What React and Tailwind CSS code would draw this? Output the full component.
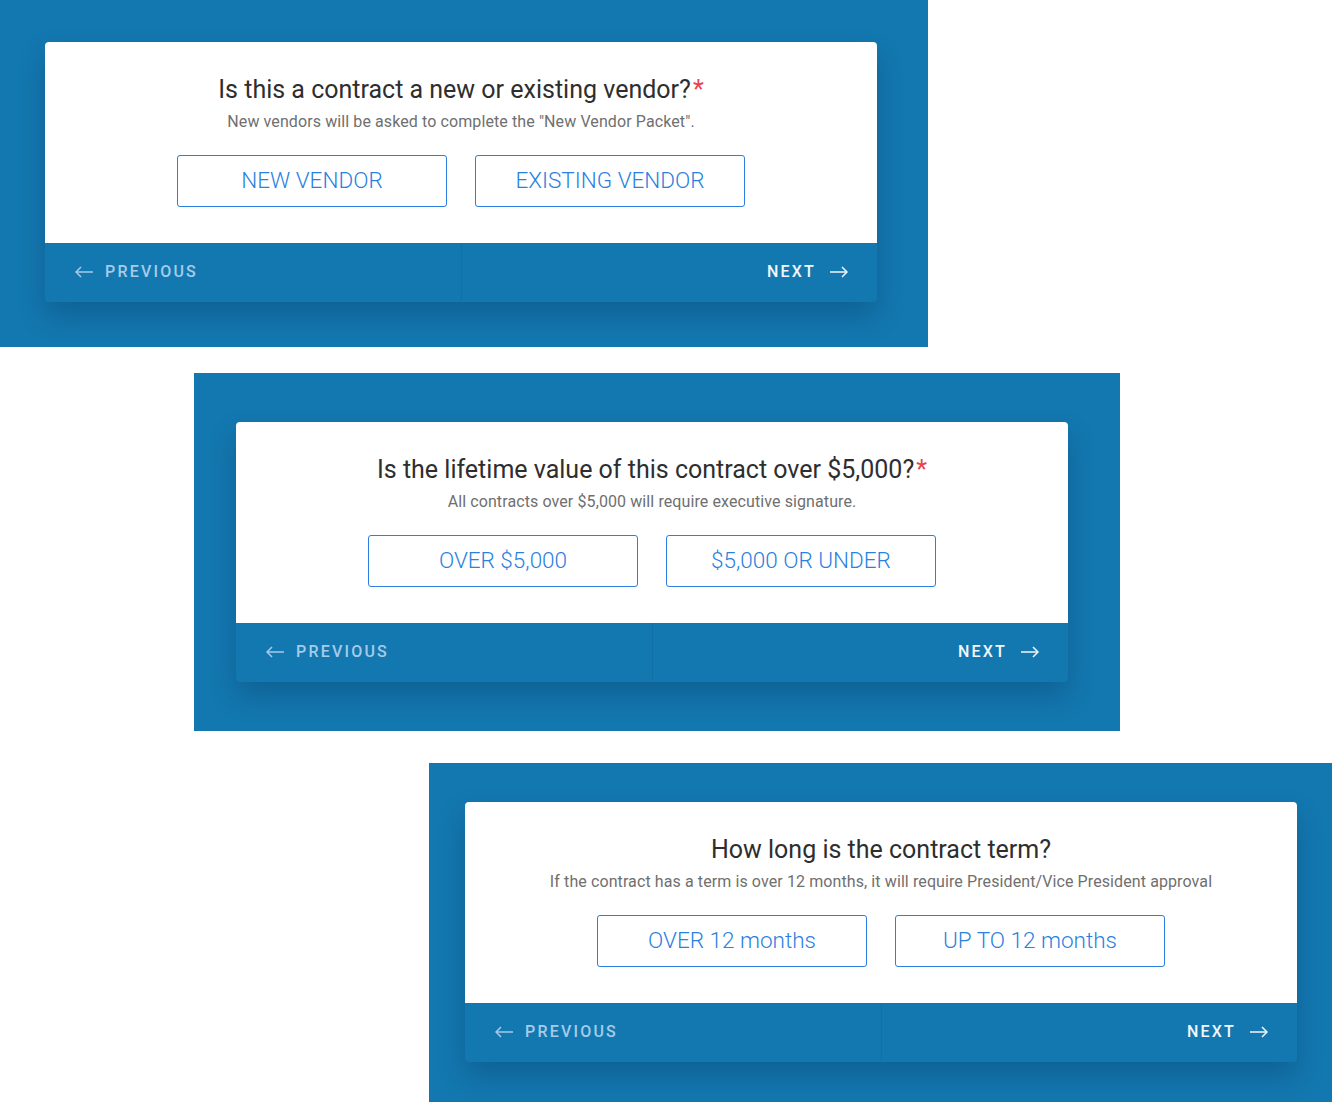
import React from "react";

const steps = [
  {
    title: "Is this a contract a new or existing vendor?",
    required: true,
    hint: 'New vendors will be asked to complete the "New Vendor Packet".',
    options: ["NEW VENDOR", "EXISTING VENDOR"],
    panel: "w-[928px] h-[347px] pt-[42px] pl-[45px]",
  },
  {
    title: "Is the lifetime value of this contract over $5,000?",
    required: true,
    hint: "All contracts over $5,000 will require executive signature.",
    options: ["OVER $5,000", "$5,000 OR UNDER"],
    panel: "ml-[194px] mt-[26px] w-[926px] h-[358px] pt-[49px] pl-[42px]",
  },
  {
    title: "How long is the contract term?",
    required: false,
    hint: "If the contract has a term is over 12 months, it will require President/Vice President approval",
    options: ["OVER 12 months", "UP TO 12 months"],
    panel: "ml-[429px] mt-[32px] w-[903px] h-[339px] pt-[39px] pl-[36px]",
  },
];

function ArrowLeft() {
  return (
    <svg viewBox="0 0 18 12" className="h-3 w-[18px]" fill="none" stroke="currentColor" strokeWidth="1.5">
      <line x1="1" y1="6" x2="18" y2="6" />
      <polyline points="6,1 1,6 6,11" />
    </svg>
  );
}

function ArrowRight() {
  return (
    <svg viewBox="0 0 18 12" className="h-3 w-[18px]" fill="none" stroke="currentColor" strokeWidth="1.5">
      <line x1="0" y1="6" x2="17" y2="6" />
      <polyline points="12,1 17,6 12,11" />
    </svg>
  );
}

function StepCard({ step }) {
  return (
    <div className="w-[832px] rounded-[4px] bg-[#1478b0] shadow-[0_14px_28px_rgba(0,20,50,0.22)] overflow-hidden">
      {/* question */}
      <div className="bg-white pt-[32px] pb-[36px] flex flex-col items-center">
        <h2 className="text-[25px] leading-[32px] text-[#2e2e2e]">
          {step.title}
          {step.required && <span className="text-[#e8434b] ml-[2px]">*</span>}
        </h2>
        <p className="mt-[5px] text-[16px] leading-[22px] tracking-[0.1px] text-[#6f6f6f]">{step.hint}</p>
        <div className="mt-[22px] flex gap-[28px]">
          {step.options.map((o) => (
            <button
              key={o}
              className="h-[52px] w-[270px] rounded-[3px] border border-[#2b7fe0] bg-white text-[22.5px] font-light text-[#2b7fe0]"
            >
              {o}
            </button>
          ))}
        </div>
      </div>

      {/* nav */}
      <div className="flex h-[59px] pb-[1px]">
        <button className="flex flex-1 items-center gap-[12px] pl-[30px] text-[#a6cbea]">
          <ArrowLeft />
          <span className="text-[16px] font-medium tracking-[2.2px]">PREVIOUS</span>
        </button>
        <button className="flex flex-1 items-center justify-end gap-[14px] pr-[29px] border-l border-[#1170a6] text-[#f2f6fa]">
          <span className="text-[16px] font-medium tracking-[2.2px]">NEXT</span>
          <ArrowRight />
        </button>
      </div>
    </div>
  );
}

export default function App() {
  return (
    <div className="min-h-screen bg-white overflow-hidden" style={{ fontFamily: "Roboto, 'Noto Sans', sans-serif" }}>
      {steps.map((s) => (
        <div key={s.title} className={`bg-[#1378b0] ${s.panel}`}>
          <StepCard step={s} />
        </div>
      ))}
    </div>
  );
}
